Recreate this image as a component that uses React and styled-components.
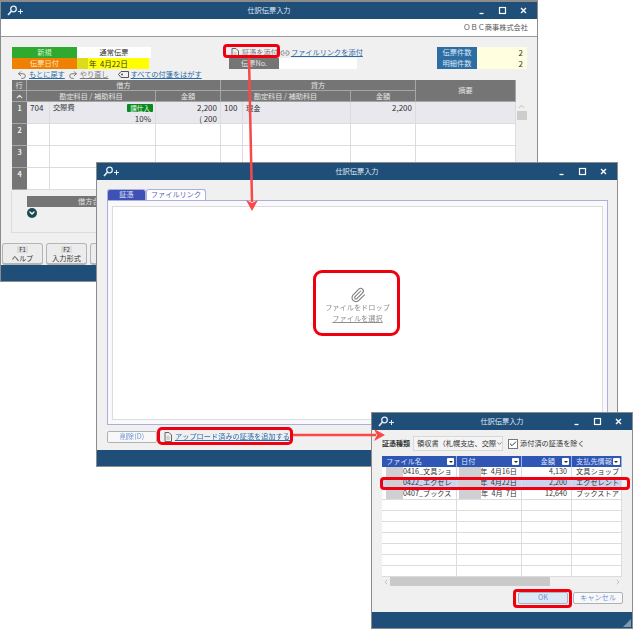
import { Fragment } from 'react';
import styled, { createGlobalStyle } from 'styled-components';
import { Paperclip, Undo2, Redo2, Link2, ChevronUp, ChevronDown, ChevronLeft, ChevronRight, Check } from 'lucide-react';

const GlobalStyle = createGlobalStyle`
    html, body {
        margin: 0;
        background: #fff;
    }
    * {
        box-sizing: border-box;
    }
    body {
        font-family: "Noto Sans CJK JP", "Noto Sans", sans-serif;
        font-size: 7.2px;
        line-height: 1;
        color: #333;
    }
`

const Page = styled.div`
    position: relative;
    width: 637px;
    height: 629px;
    overflow: hidden;
    filter: blur(.3px);
`

const Window = styled.div`
    position: absolute;
    left: ${({ $x }) => $x}px;
    top: ${({ $y }) => $y}px;
    width: ${({ $w }) => $w}px;
    height: ${({ $h }) => $h}px;
    display: flex;
    flex-direction: column;
    background: #f0f0f0;
    border: 1px solid #8c8c8c;
    border-top-width: ${({ $top }) => $top || 1}px;
`

const TitleBar = styled.div`
    flex: none;
    position: relative;
    height: 17px;
    display: flex;
    align-items: center;
    justify-content: center;
    background: #1f4e79;
    color: #dfe7ef;
    font-size: 7.2px;
`

const TitleIcon = styled.svg`
    position: absolute;
    left: 6px;
    top: 3px;
    width: 17px;
    height: 11px;
`

const WinButtons = styled.div`
    position: absolute;
    right: 9px;
    top: 4px;
    display: flex;
    column-gap: 12px;

    svg {
        display: block;
        width: 9px;
        height: 9px;
    }
`

const Footer = styled.div`
    flex: none;
    position: relative;
    height: 16px;
    margin-top: auto;
    background: #1f4e79;
`

const Grip = styled.svg`
    position: absolute;
    right: 1px;
    bottom: 1px;
    width: 8px;
    height: 8px;
`

const CompanyBand = styled.div`
    flex: none;
    height: 18px;
    padding-right: 9px;
    display: flex;
    align-items: center;
    justify-content: flex-end;
    background: #fff;
    border-bottom: 1px solid #9a9a9a;
    font-size: 7.2px;
    color: #555;
`

const SlipHead = styled.div`
    display: grid;
    grid-template-columns: 139px 130px 90px;
    column-gap: 78px;
    margin: 10px 0 0 11px;
`

const Pair = styled.div`
    display: grid;
    grid-template-columns: ${({ $cols }) => $cols};
    height: 11px;
`

const Tag = styled.div`
    display: flex;
    align-items: center;
    justify-content: center;
    background: ${({ $bg }) => $bg};
    color: ${({ $color }) => $color || '#fff'};
`

const Field = styled.div`
    display: flex;
    align-items: center;
    justify-content: ${({ $align }) => $align || 'center'};
    padding: 0 ${({ $pad }) => $pad || 0}px;
    background: ${({ $bg }) => $bg || '#fff'};
    font-size: ${({ $num }) => ($num ? 8 : 7.2)}px;
    color: #333;
`

const DateField = styled.div`
    display: flex;
    align-items: center;
    background: linear-gradient(90deg, #dcdc1e 0 11px, #ffff00 11px);
    border-right: 2px solid #f0f0f0;
    padding-left: 12px;
    font-size: 7.6px;
`

const LinkRow = styled.div`
    display: flex;
    align-items: center;
    height: 11px;
    padding-left: 2px;
`

const TextLink = styled.a`
    color: ${({ $muted }) => ($muted ? '#777' : '#2d6aa6')};
    text-decoration: underline;
    white-space: nowrap;
`

const DocIcon = styled.svg`
    flex: none;
    width: 8px;
    height: 10px;
    margin-right: ${({ $gap }) => $gap || 3}px;
`

const LinkIcon = styled(Link2)`
    flex: none;
    width: 10px;
    height: 10px;
    margin: 0 1px 0 2px;
    color: #777;
`

const Toolbar = styled.div`
    display: flex;
    align-items: center;
    height: 12px;
    margin-left: 16px;

    svg {
        flex: none;
        color: #666;
    }
`

const ToolItem = styled.div`
    display: flex;
    align-items: center;
    column-gap: 2px;
    margin-right: ${({ $gap }) => $gap || 3}px;
`

const SlipArea = styled.div`
    display: flex;
    margin-left: 11px;
`

const SlipTable = styled.div`
    display: grid;
    width: 504px;
    grid-template-columns: 15px 23px 106px 65px 22px 108px 65px 100px;
    grid-template-rows: 11px 11px repeat(4, 22px);
`

const HeadCell = styled.div`
    grid-column: ${({ $col }) => $col};
    grid-row: ${({ $row }) => $row};
    display: flex;
    align-items: center;
    justify-content: center;
    background: #757575;
    color: #e4e4e4;
    border-right: 1px solid #a6a6a6;
    border-bottom: 1px solid #a6a6a6;

    svg {
        width: 9px;
        height: 9px;
        stroke-width: 3;
    }
`

const RowNo = styled.div`
    padding-top: 3px;
    text-align: center;
    background: #757575;
    color: #eee;
    font-weight: 700;
    border-bottom: 1px solid #a6a6a6;
`

const Cell = styled.div`
    padding: 0 3px;
    line-height: 11px;
    font-size: 8px;
    text-align: ${({ $right }) => ($right ? 'right' : 'left')};
    background: ${({ $on }) => ($on ? '#e8e8ee' : '#fff')};
    border-right: 1px solid #dcdcdc;
    border-bottom: 1px solid #dcdcdc;
    white-space: nowrap;
`

const NameLine = styled.div`
    display: flex;
    justify-content: space-between;
    align-items: center;
    height: 11px;
    font-size: 7.2px;
`

const CellText = styled.span`
    font-size: 7.2px;
`

const SubLine = styled.div`
    text-align: right;
    margin-right: 1px;
`

const Badge = styled.span`
    margin-right: -1px;
    padding: 0 3px;
    height: 8px;
    line-height: 8px;
    border-radius: 1px;
    background: #0a8a1e;
    color: #e8f5e8;
    font-size: 6.6px;
`

const SideBar = styled.div`
    width: 10px;
    margin-left: 1px;
    padding-top: 22px;

    svg {
        display: block;
        width: 9px;
        height: 9px;
        color: #aaa;
    }
`

const Thumb = styled.div`
    height: 9px;
    background: #cdcdcd;
`

const TotalsBox = styled.div`
    height: 44px;
    margin: 1px 8px 0 10px;
    padding: 5px 0 0 15px;
    border: 1px solid #dcdcdc;
    border-top: none;
`

const TotalsBar = styled.div`
    height: 11px;
    padding-left: 51px;
    display: flex;
    align-items: center;
    background: #757575;
    color: #e4e4e4;
`

const RoundToggle = styled.div`
    width: 10px;
    height: 10px;
    margin-top: 1px;
    border-radius: 50%;
    display: flex;
    align-items: center;
    justify-content: center;
    background: #1d4a50;

    svg {
        width: 8px;
        height: 8px;
        color: #fff;
        stroke-width: 4;
    }
`

const FnRow = styled.div`
    display: flex;
    column-gap: 3px;
    margin: 10px 0 0 1px;
`

const FnKey = styled.div`
    width: 41px;
    height: 22px;
    padding-top: 2px;
    display: flex;
    flex-direction: column;
    align-items: center;
    row-gap: 2px;
    background: #ececec;
    border: 1px solid #b4b4b4;
    border-bottom-width: 2px;
    border-radius: 3px;
`

const FnCap = styled.span`
    padding: 0 2px;
    background: #dcdcdc;
    font-size: 6px;
    line-height: 7px;
`

const DialogBody = styled.div`
    flex: 1;
    display: flex;
    flex-direction: column;
    padding: 9px 9px 0 10px;
`

const Tabs = styled.div`
    display: flex;
    height: 11px;
`

const TabBtn = styled.div`
    width: ${({ $w }) => $w}px;
    display: flex;
    align-items: center;
    justify-content: center;
    border: 1px solid #a9b0de;
    border-bottom: none;
    border-radius: 3px 3px 0 0;
    background: ${({ $active }) => ($active ? '#3f51b5' : '#fff')};
    color: ${({ $active }) => ($active ? '#dfe3f5' : '#5a66b8')};
`

const DropPanel = styled.div`
    height: 225px;
    padding: 5px 4px;
    background: #f9f9fc;
    border: 1px solid #a9b0de;
`

const DropArea = styled.div`
    height: 214px;
    display: flex;
    flex-direction: column;
    align-items: center;
    padding-top: 80px;
    background: #fff;
    border: 1px solid #dcdcdc;
    color: #8e8e8e;

    svg {
        width: 16px;
        height: 16px;
        margin-bottom: 1px;
        color: #7a7a7a;
        stroke-width: 1.6;
    }
`

const DropText = styled.div`
    margin-bottom: 4px;
    text-decoration: ${({ $link }) => ($link ? 'underline' : 'none')};
`

const DialogActions = styled.div`
    display: flex;
    align-items: center;
    margin-top: 6px;
`

const PlainBtn = styled.div`
    width: ${({ $w }) => $w}px;
    height: 12px;
    display: flex;
    align-items: center;
    justify-content: center;
    margin-right: ${({ $gap }) => $gap || 0}px;
    background: ${({ $bg }) => $bg || '#f8f8f8'};
    border: 1px solid #aeb2b8;
    border-radius: 2px;
    color: #6f93d8;
`

const PickerBody = styled.div`
    flex: 1;
    display: flex;
    flex-direction: column;
    padding: 6px 9px 0 10px;
`

const FilterRow = styled.div`
    display: flex;
    align-items: center;
    height: 15px;
`

const FilterLabel = styled.span`
    width: 31px;
    font-weight: 700;
    font-size: 7px;
    white-space: nowrap;
`

const FilterSelect = styled.div`
    width: 90px;
    height: 15px;
    padding: 0 3px;
    display: flex;
    align-items: center;
    justify-content: space-between;
    background: #f4f4f4;
    border: 1px solid #d8d8d8;
    white-space: nowrap;
    overflow: hidden;

    svg {
        flex: none;
        width: 7px;
        height: 7px;
    }
`

const CheckBox = styled.div`
    width: 10px;
    height: 10px;
    margin: 0 2px 0 5px;
    display: flex;
    align-items: center;
    justify-content: center;
    background: #fff;
    border: 1px solid #777;

    svg {
        width: 8px;
        height: 8px;
        stroke-width: 3;
    }
`

const FileTable = styled.div`
    margin-top: 5px;
    width: 240px;
`

const FileHead = styled.div`
    display: grid;
    grid-template-columns: 75px 65px 50px 50px;
    height: 11px;
    background: #2f55b5;
`

const FileHeadCell = styled.div`
    display: flex;
    align-items: center;
    justify-content: ${({ $end }) => ($end ? 'flex-end' : 'space-between')};
    column-gap: ${({ $end }) => ($end ? 7 : 1)}px;
    padding: 0 2px 0 4px;
    color: #dfe6f7;
    border-right: 1px solid #9db0e0;
    white-space: nowrap;
    overflow: hidden;
`

const FilterMark = styled.span`
    flex: none;
    width: 7px;
    height: 7px;
    border-radius: 1px;
    background: #fff;
    position: relative;

    &::after {
        content: "";
        position: absolute;
        left: 1.5px;
        top: 2.5px;
        border: 2px solid transparent;
        border-top: 2.5px solid #2a2a2a;
    }
`

const FileRow = styled.div`
    display: grid;
    grid-template-columns: 75px 65px 50px 50px;
    height: 11px;
    background: ${({ $on }) => ($on ? '#c9d5f0' : '#fff')};
    border-bottom: 1px solid #dcdcdc;
`

const FileCell = styled.div`
    display: flex;
    align-items: center;
    justify-content: ${({ $right }) => ($right ? 'flex-end' : 'flex-start')};
    padding: 0 ${({ $right }) => ($right ? 4 : 1)}px 0 ${({ $mask }) => $mask || 1}px;
    position: relative;
    border-right: 1px solid #dcdcdc;
    white-space: pre;
    overflow: hidden;
`

// ファイル名・日付の伏せ字部分
const Mask = styled.span`
    position: absolute;
    left: ${({ $x }) => $x}px;
    top: 0;
    bottom: 0;
    width: ${({ $w }) => $w}px;
    background: #cfcfd4;
`

const HScroll = styled.div`
    height: 9px;
    display: flex;
    align-items: center;
    justify-content: space-between;
    position: relative;

    svg {
        width: 8px;
        height: 8px;
        color: #aaa;
    }
`

const HThumb = styled.div`
    position: absolute;
    left: 8px;
    top: 0;
    width: 160px;
    height: 9px;
    background: #c9c9c9;
`

const PickerActions = styled.div`
    display: flex;
    justify-content: flex-end;
    margin-top: 6px;
`

// 赤枠
const Mark = styled.div`
    position: absolute;
    left: ${({ $x }) => $x}px;
    top: ${({ $y }) => $y}px;
    width: ${({ $w }) => $w}px;
    height: ${({ $h }) => $h}px;
    border: ${({ $b }) => $b || 2}px solid #f0000f;
    border-radius: ${({ $r }) => $r || 3}px;
`

const Arrow = styled.svg`
    position: absolute;
    left: ${({ $x }) => $x}px;
    top: ${({ $y }) => $y}px;
    overflow: visible;
`

const AttachIcon = ({ gap }) => (
    <DocIcon viewBox="0 0 8 10" $gap={gap}>
        <path d="M1 .5h4l2.500 2.500v6.500h-6.500z" fill="#eee" stroke="#666" strokeWidth="1" />
        <path d="M2.500 5h3M2.500 7h3" stroke="#999" strokeWidth=".7" />
    </DocIcon>
)

const TitleInner = ({ title }) => (
    <TitleBar>
        <TitleIcon viewBox="0 0 17 11">
            <circle cx="6.500" cy="4" r="2.800" fill="none" stroke="#e6edf4" strokeWidth="1.300" />
            <path d="M4.500 6L1 10" stroke="#e6edf4" strokeWidth="1.700" />
            <path d="M11 6.500h5M13.500 4v5" stroke="#e6edf4" strokeWidth="1" />
        </TitleIcon>
        {title}
        <WinButtons>
            <svg viewBox="0 0 9 9"><path d="M2.500 7.500h4" stroke="#fff" strokeWidth="1.300" /></svg>
            <svg viewBox="0 0 9 9"><rect x="1.500" y="1.500" width="6" height="6" fill="none" stroke="#fff" strokeWidth="1.200" /></svg>
            <svg viewBox="0 0 9 9"><path d="M2 2l5 5M7 2l-5 5" stroke="#fff" strokeWidth="1.400" /></svg>
        </WinButtons>
    </TitleBar>
)

const FILE_ROWS = [
    { name: '0416_文具ショ', date: '年  4月16日', amount: '4,130', vendor: '文具ショップ' },
    { name: '0422_エクセレ', date: '年  4月22日', amount: '2,200', vendor: 'エクセレント', on: true },
    { name: '0407_ブックス', date: '年  4月  7日', amount: '12,640', vendor: 'ブックストア' },
];

const EMPTY_ROWS = Array.from({ length: 7 });
const FN_KEYS = [['F1', 'ヘルプ'], ['F2', '入力形式'], ['F3', '']];

const JournalWindow = () => (
    <Window $x={0} $y={0} $w={538} $h={282} $top={2}>
        <TitleInner title="仕訳伝票入力" />
        <CompanyBand>ＯＢＣ商事株式会社</CompanyBand>
        <SlipHead>
            <div>
                <Pair $cols="65px 74px">
                    <Tag $bg="#2eaa2e" $color="#d8f0d8">新規</Tag>
                    <Field>通常伝票</Field>
                </Pair>
                <Pair $cols="65px 74px">
                    <Tag $bg="#f08000" $color="#fde8cc">伝票日付</Tag>
                    <DateField>年 &nbsp;4月22日</DateField>
                </Pair>
            </div>
            <div>
                <LinkRow>
                    <AttachIcon />
                    <TextLink $muted>証憑を添付</TextLink>
                    <LinkIcon />
                    <TextLink>ファイルリンクを添付</TextLink>
                </LinkRow>
                <Pair $cols="50px 78px">
                    <Tag $bg="#757575" $color="#e4e4e4">伝票No.</Tag>
                    <Field />
                </Pair>
            </div>
            <div>
                <Pair $cols="40px 50px">
                    <Tag $bg="#2e6da4" $color="#d8e6f2">伝票件数</Tag>
                    <Field $bg="#ffffe0" $align="flex-end" $pad={4} $num>2</Field>
                </Pair>
                <Pair $cols="40px 50px">
                    <Tag $bg="#2e6da4" $color="#d8e6f2">明細件数</Tag>
                    <Field $bg="#ffffe0" $align="flex-end" $pad={4} $num>2</Field>
                </Pair>
            </div>
        </SlipHead>
        <Toolbar>
            <ToolItem>
                <Undo2 size={10} />
                <TextLink>もとに戻す</TextLink>
            </ToolItem>
            <ToolItem $gap={9}>
                <Redo2 size={10} />
                <TextLink $muted>やり直し</TextLink>
            </ToolItem>
            <ToolItem>
                <svg width="11" height="7" viewBox="0 0 11 7">
                    <path d="M3 .5h7.500v6H3L.5 3.500z" fill="none" stroke="#555" strokeWidth="1" />
                    <circle cx="4" cy="3.500" r="1" fill="#555" />
                </svg>
                <TextLink>すべての付箋をはがす</TextLink>
            </ToolItem>
        </Toolbar>
        <SlipArea>
            <SlipTable>
                <HeadCell $col="1" $row="1">行</HeadCell>
                <HeadCell $col="1" $row="2"><ChevronUp /></HeadCell>
                <HeadCell $col="2 / span 3" $row="1">借方</HeadCell>
                <HeadCell $col="5 / span 3" $row="1">貸方</HeadCell>
                <HeadCell $col="8" $row="1 / span 2">摘要</HeadCell>
                <HeadCell $col="2 / span 2" $row="2">勘定科目 / 補助科目</HeadCell>
                <HeadCell $col="4" $row="2">金額</HeadCell>
                <HeadCell $col="5 / span 2" $row="2">勘定科目 / 補助科目</HeadCell>
                <HeadCell $col="7" $row="2">金額</HeadCell>

                <RowNo>1</RowNo>
                <Cell $on>704</Cell>
                <Cell $on>
                    <NameLine>交際費<Badge>課仕入</Badge></NameLine>
                    <SubLine>10%</SubLine>
                </Cell>
                <Cell $on $right><div>2,200</div><div>( 200</div></Cell>
                <Cell $on>100</Cell>
                <Cell $on><CellText>現金</CellText></Cell>
                <Cell $on $right>2,200</Cell>
                <Cell $on />

                {[2, 3, 4].map(no => (
                    <Fragment key={no}>
                        <RowNo>{no}</RowNo>
                        {Array.from({ length: 7 }).map((_, i) => <Cell key={i} />)}
                    </Fragment>
                ))}
            </SlipTable>
            <SideBar>
                <ChevronUp />
                <Thumb />
            </SideBar>
        </SlipArea>
        <TotalsBox>
            <TotalsBar>借方合計</TotalsBar>
            <RoundToggle><ChevronDown /></RoundToggle>
        </TotalsBox>
        <FnRow>
            {FN_KEYS.map(([cap, label]) => (
                <FnKey key={cap}>
                    <FnCap>{cap}</FnCap>
                    {label}
                </FnKey>
            ))}
        </FnRow>
        <Footer />
    </Window>
)

const EvidenceWindow = () => (
    <Window $x={96} $y={162} $w={522} $h={305}>
        <TitleInner title="仕訳伝票入力" />
        <DialogBody>
            <Tabs>
                <TabBtn $w={39} $active>証憑</TabBtn>
                <TabBtn $w={60}>ファイルリンク</TabBtn>
            </Tabs>
            <DropPanel>
                <DropArea>
                    <Paperclip />
                    <DropText>ファイルをドロップ</DropText>
                    <DropText $link>ファイルを選択</DropText>
                </DropArea>
            </DropPanel>
            <DialogActions>
                <PlainBtn $w={50} $gap={7}>削除(D)</PlainBtn>
                <AttachIcon gap={3} />
                <TextLink>アップロード済みの証憑を追加する</TextLink>
            </DialogActions>
        </DialogBody>
        <Footer />
    </Window>
)

const PickerWindow = () => (
    <Window $x={371} $y={412} $w={262} $h={217}>
        <TitleInner title="仕訳伝票入力" />
        <PickerBody>
            <FilterRow>
                <FilterLabel>証憑種類</FilterLabel>
                <FilterSelect>領収書（札幌支店、交際<ChevronDown /></FilterSelect>
                <CheckBox><Check /></CheckBox>
                添付済の証憑を除く
            </FilterRow>
            <FileTable>
                <FileHead>
                    <FileHeadCell>ファイル名<FilterMark /></FileHeadCell>
                    <FileHeadCell>日付<FilterMark /></FileHeadCell>
                    <FileHeadCell $end>金額<FilterMark /></FileHeadCell>
                    <FileHeadCell>支払先情報<FilterMark /></FileHeadCell>
                </FileHead>
                {FILE_ROWS.map(row => (
                    <FileRow key={row.name} $on={row.on}>
                        <FileCell $mask={21}><Mask $x={4} $w={17} />{row.name}</FileCell>
                        <FileCell $right><Mask $x={2} $w={22} />{row.date}</FileCell>
                        <FileCell $right>{row.amount}</FileCell>
                        <FileCell $mask={4}>{row.vendor}</FileCell>
                    </FileRow>
                ))}
                {EMPTY_ROWS.map((_, i) => (
                    <FileRow key={i}>
                        <FileCell /><FileCell /><FileCell /><FileCell />
                    </FileRow>
                ))}
                <HScroll>
                    <ChevronLeft />
                    <HThumb />
                    <ChevronRight />
                </HScroll>
            </FileTable>
            <PickerActions>
                <PlainBtn $w={50} $gap={5} $bg="#dbe9f6">OK</PlainBtn>
                <PlainBtn $w={50}>キャンセル</PlainBtn>
            </PickerActions>
        </PickerBody>
        <Footer>
            <Grip viewBox="0 0 8 8"><path d="M8 0v8H0z" fill="#7f99b3" /></Grip>
        </Footer>
    </Window>
)

const App = () => {
    return (
        <Page>
            <GlobalStyle />
            <JournalWindow />
            <EvidenceWindow />
            <PickerWindow />

            <Mark $x={223} $y={44} $w={57} $h={14} $b={3} $r={4} />
            <Mark $x={313} $y={270} $w={87} $h={66} $b={3} $r={9} />
            <Mark $x={157} $y={427} $w={136} $h={18} $b={3} $r={5} />
            <Mark $x={380} $y={477} $w={250} $h={13} $b={3} $r={4} />
            <Mark $x={513} $y={589} $w={59} $h={19} $b={3} $r={4} />

            <Arrow $x={244} $y={56} width="16" height="156" viewBox="0 0 16 156">
                <path d="M5 2L8 146" stroke="#f84848" strokeWidth="2.500" fill="none" />
                <path d="M2 144L8 155L14 144L8 147z" fill="#f84848" />
            </Arrow>
            <Arrow $x={292} $y={428} width="94" height="14" viewBox="0 0 94 14">
                <path d="M1 7H84" stroke="#f84848" strokeWidth="2.500" fill="none" />
                <path d="M82 1L93 7L82 13L85 7z" fill="#f84848" />
            </Arrow>
        </Page>
    )
}

export default App;
